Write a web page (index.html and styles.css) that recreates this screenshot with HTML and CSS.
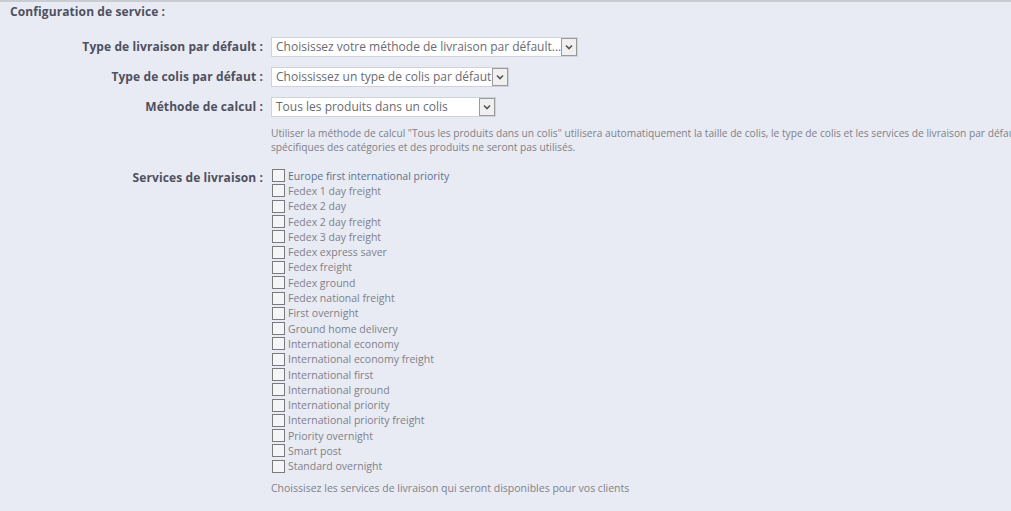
FILE: index.html
```html
<!DOCTYPE html>
<html lang="fr">
<head>
<meta charset="utf-8">
<title>Configuration de service</title>
<link rel="stylesheet" href="styles.css">
</head>
<body>
<div class="panel">
  <h3 class="title">Configuration de service :</h3>
  <div class="form">
    <div class="row row-select">
      <label class="lbl">Type de livraison par défault :</label>
      <div class="field">
        <div class="select s1"><span class="sel-text">Choisissez votre méthode de livraison par défault...</span><span class="arrow"><svg width="8" height="6" viewBox="0 0 8 6"><path d="M1 1.5 L4 4.5 L7 1.5" fill="none" stroke="#555" stroke-width="1.6"/></svg></span></div>
      </div>
    </div>
    <div class="row row-select">
      <label class="lbl">Type de colis par défaut :</label>
      <div class="field">
        <div class="select s2"><span class="sel-text">Choississez un type de colis par défaut</span><span class="arrow"><svg width="8" height="6" viewBox="0 0 8 6"><path d="M1 1.5 L4 4.5 L7 1.5" fill="none" stroke="#555" stroke-width="1.6"/></svg></span></div>
      </div>
    </div>
    <div class="row row-select">
      <label class="lbl">Méthode de calcul :</label>
      <div class="field">
        <div class="select s3"><span class="sel-text">Tous les produits dans un colis</span><span class="arrow"><svg width="8" height="6" viewBox="0 0 8 6"><path d="M1 1.5 L4 4.5 L7 1.5" fill="none" stroke="#555" stroke-width="1.6"/></svg></span></div>
        <p class="desc">Utiliser la méthode de calcul "Tous les produits dans un colis" utilisera automatiquement la taille de colis, le type de colis et les services de livraison par défaut. Les paramètres spécifiques des catégories et des produits ne seront pas utilisés.</p>
      </div>
    </div>
    <div class="row row-services">
      <label class="lbl">Services de livraison :</label>
      <div class="field">
        <ul class="checks">
          <li class="active"><span class="box"></span>Europe first international priority</li>
          <li><span class="box"></span>Fedex 1 day freight</li>
          <li><span class="box"></span>Fedex 2 day</li>
          <li><span class="box"></span>Fedex 2 day freight</li>
          <li><span class="box"></span>Fedex 3 day freight</li>
          <li><span class="box"></span>Fedex express saver</li>
          <li><span class="box"></span>Fedex freight</li>
          <li><span class="box"></span>Fedex ground</li>
          <li><span class="box"></span>Fedex national freight</li>
          <li><span class="box"></span>First overnight</li>
          <li><span class="box"></span>Ground home delivery</li>
          <li><span class="box"></span>International economy</li>
          <li><span class="box"></span>International economy freight</li>
          <li><span class="box"></span>International first</li>
          <li><span class="box"></span>International ground</li>
          <li><span class="box"></span>International priority</li>
          <li><span class="box"></span>International priority freight</li>
          <li><span class="box"></span>Priority overnight</li>
          <li><span class="box"></span>Smart post</li>
          <li><span class="box"></span>Standard overnight</li>
        </ul>
        <p class="help">Choissisez les services de livraison qui seront disponibles pour vos clients</p>
      </div>
    </div>
  </div>
</div>
</body>
</html>
```

FILE: styles.css
```css
html, body {
  margin: 0;
  padding: 0;
  background: #e8ebf3;
  overflow: hidden;
}
body {
  font-family: "Open Sans", "Liberation Sans", sans-serif;
}
.panel {
  border-top: 2px solid #c9ccd3;
  height: 509px;
  box-sizing: border-box;
  padding: 2px 0 0 10px;
  overflow: hidden;
}
.title {
  margin: 0;
  font-size: 12px;
  font-weight: bold;
  color: #4f5060;
  line-height: 16px;
  letter-spacing: 0.1px;
}
.form {
  margin-top: 17px;
}
.row {
  display: grid;
  grid-template-columns: 253px 1fr;
  column-gap: 8px;
}
.row-select {
  margin-bottom: 10px;
}
.lbl {
  text-align: right;
  font-size: 12px;
  font-weight: bold;
  color: #4f5060;
  line-height: 20px;
  letter-spacing: 0.1px;
}
.select {
  display: flex;
  height: 20px;
  box-sizing: border-box;
  border: 1px solid #cfd2d8;
  background: #fff;
  align-items: stretch;
}
.s1 { width: 307px; }
.s2 { width: 238px; }
.s3 { width: 225px; }
.sel-text {
  flex: 1;
  overflow: hidden;
  white-space: nowrap;
  font-size: 12px;
  line-height: 18px;
  color: #6a6a72;
  padding-left: 4px;
}
.arrow {
  width: 14px;
  border: 1px solid #9a9a9a;
  background: #f0f0f0;
  display: flex;
  align-items: center;
  justify-content: center;
}
.desc {
  margin: 9px 0 0;
  font-size: 10.2px;
  line-height: 14px;
  color: #808088;
  width: 860px;
}
.row-services {
  margin-top: 14px;
}
.row-services .lbl {
  line-height: 16px;
  padding-top: 2px;
}
.checks {
  list-style: none;
  margin: 0;
  padding: 0;
}
.checks li {
  display: flex;
  align-items: center;
  height: 15.3px;
  font-size: 10.5px;
  color: #80808a;
}
.checks li.active {
  color: #5f7190;
}
.box {
  width: 11px;
  height: 11px;
  border: 1px solid #7a7a7a;
  background: #f4f5f8;
  margin: 0 3px 0 1px;
  flex: none;
}
.help {
  margin: 7px 0 0;
  font-size: 10.5px;
  color: #80808a;
}
```
